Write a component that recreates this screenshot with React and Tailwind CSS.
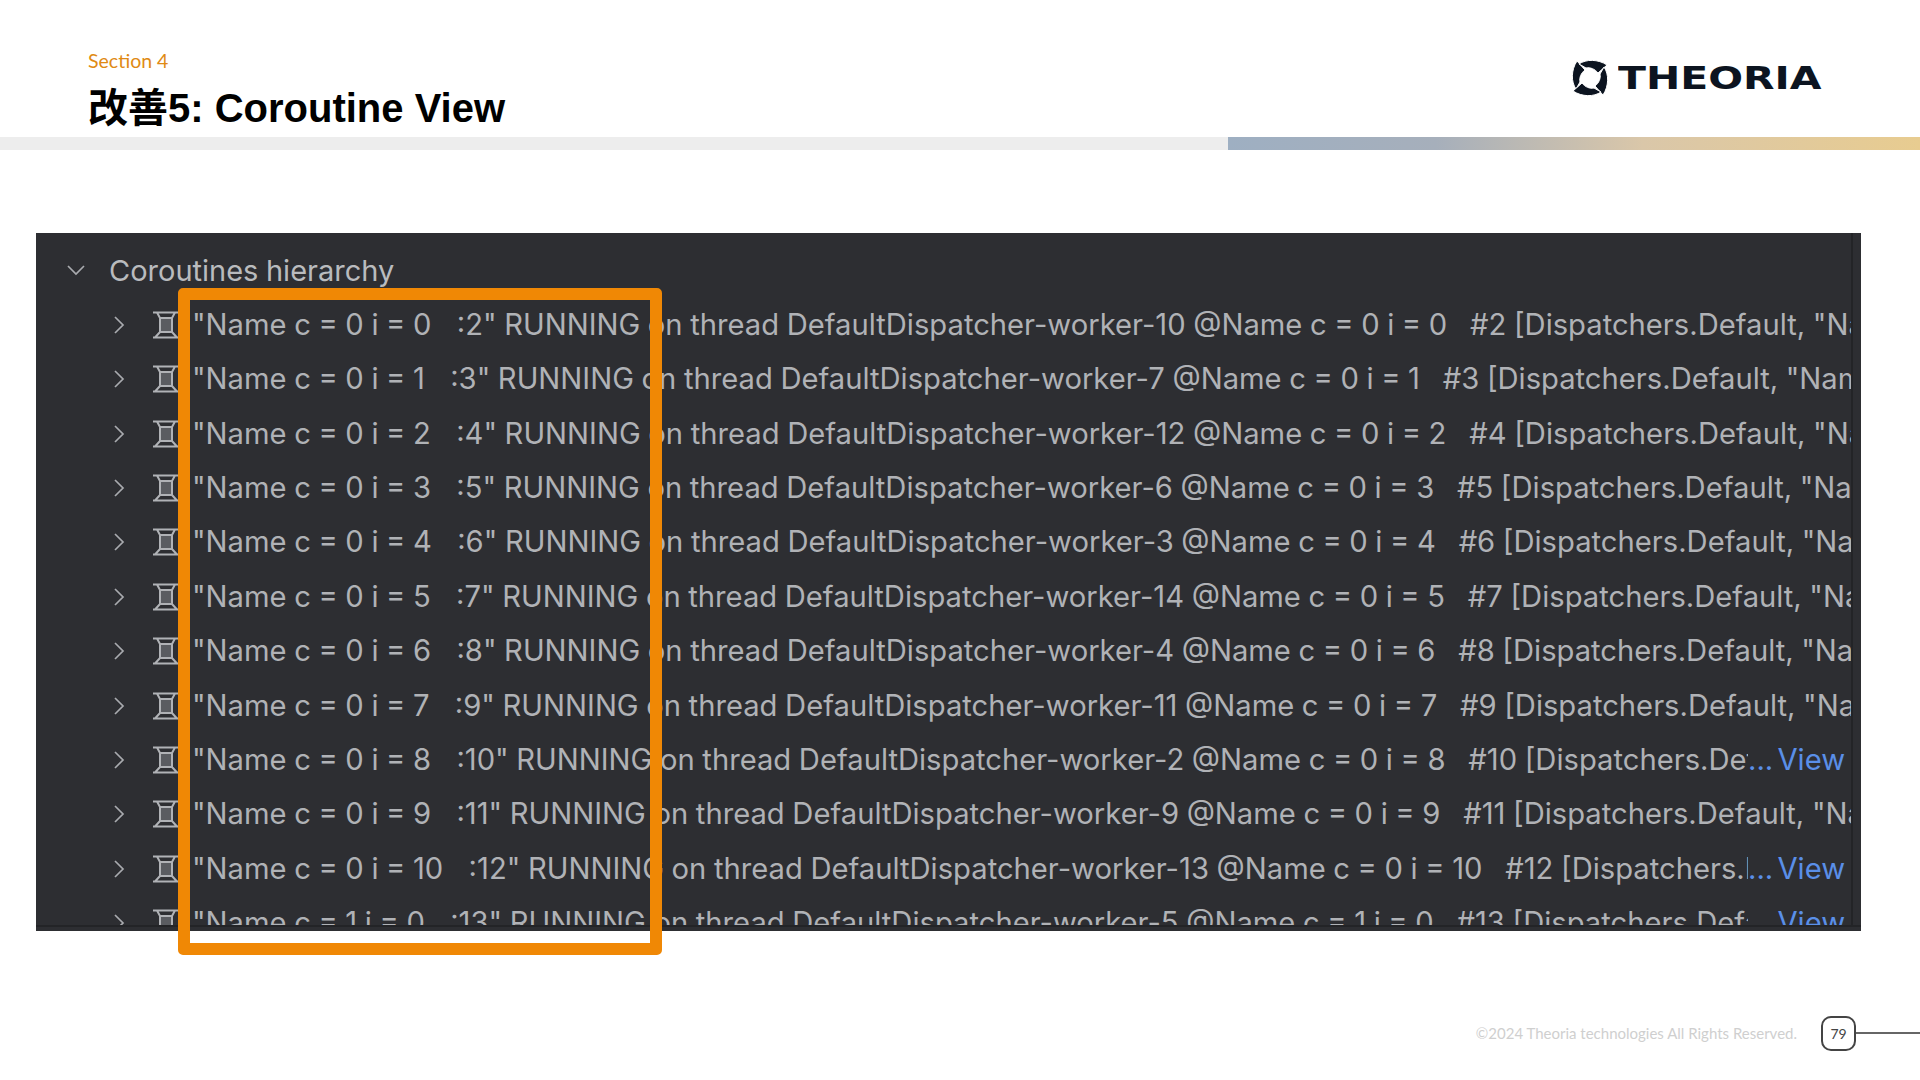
const rows = [
  { n: 'i = 0', a: ':2', w: '10', b: '#2', t: 'Dispatchers.Default, "Name c = 0 i = 0"' },
  { n: 'i = 1', a: ':3', w: '7', b: '#3', t: 'Dispatchers.Default, "Name c = 0 i = 1"' },
  { n: 'i = 2', a: ':4', w: '12', b: '#4', t: 'Dispatchers.Default, "Name c = 0 i = 2"' },
  { n: 'i = 3', a: ':5', w: '6', b: '#5', t: 'Dispatchers.Default, "Name c = 0 i = 3"' },
  { n: 'i = 4', a: ':6', w: '3', b: '#6', t: 'Dispatchers.Default, "Name c = 0 i = 4"' },
  { n: 'i = 5', a: ':7', w: '14', b: '#7', t: 'Dispatchers.Default, "Name c = 0 i = 5"' },
  { n: 'i = 6', a: ':8', w: '4', b: '#8', t: 'Dispatchers.Default, "Name c = 0 i = 6"' },
  { n: 'i = 7', a: ':9', w: '11', b: '#9', t: 'Dispatchers.Default, "Name c = 0 i = 7"' },
  { n: 'i = 8', a: ':10', w: '2', b: '#10', t: 'Dispatchers.Default, "Name c = 0 i = 8"', view: true },
  { n: 'i = 9', a: ':11', w: '9', b: '#11', t: 'Dispatchers.Default, "Name c = 0 i = 9"' },
  { n: 'i = 10', a: ':12', w: '13', b: '#12', t: 'Dispatchers.Default, "Name c = 0 i = 10"', view: true },
  { n: 'i = 0', c: 1, a: ':13', w: '5', b: '#13', t: 'Dispatchers.Default, "Name c = 1 i = 0"', view: true },
];

function Spool() {
  return (
    <svg viewBox="0 0 26 28" className="w-[26px] h-[28px] shrink-0" fill="none" stroke="#b0b2b6" strokeWidth="2">
      <rect x="6" y="7" width="14" height="14" fill="#5a5c61" stroke="none" />
      <path d="M0 1.5H26M0 26.5H26M4 1.5L7 7V21L2 26.5M22 1.5L19 7V21L24 26.5M6 7H20M6 21H20" />
    </svg>
  );
}

function Chevron({ down }) {
  return (
    <svg viewBox="0 0 20 20" className="w-5 h-5 shrink-0" fill="none" stroke="#a9abaf" strokeWidth="1.7">
      {down ? <path d="M2 6L10 14L18 6" /> : <path d="M6 2L14 10L6 18" />}
    </svg>
  );
}

function Mark() {
  const blade = 'M5 1L13 10C9 13 7 18 8 22L4 29C-1 22 -1 10 5 1Z';
  return (
    <svg viewBox="0 0 36 36" className="w-9 h-9 shrink-0" fill="#0c1420" stroke="#ffffff" strokeWidth="1">
      <path d={blade} />
      <path d={blade} transform="rotate(90 18 18)" />
      <path d={blade} transform="rotate(180 18 18)" />
      <path d={blade} transform="rotate(270 18 18)" />
    </svg>
  );
}

export default function App() {
  return (
    <div className="relative w-[1920px] h-[1080px] overflow-hidden bg-white flex flex-col font-['Liberation_Sans',sans-serif]">
      <header className="h-[137px] flex justify-between pl-[88px] pr-[99px]">
        <div className="pt-[49px]">
          <div className="text-[19.5px] leading-[24px] text-[#e08a14] font-['Lato',sans-serif]">Section 4</div>
          <h1 className="mt-[10px] text-[40px] leading-[50px] font-bold text-black font-['Liberation_Sans','Noto_Sans_CJK_SC',sans-serif]">改善5: Coroutine View</h1>
        </div>
        <div className="pt-[60px] flex items-start gap-[10px] w-[249px]">
          <Mark />
          <span className="mt-[-2px] block origin-left scale-x-[1.28] text-[32px] leading-[40px] font-bold text-[#0c1420] font-['DejaVu_Sans',sans-serif]">THEORIA</span>
        </div>
      </header>
      <div className="h-[13px] flex shrink-0">
        <div className="w-[1228px] bg-[#ededed]" />
        <div className="flex-1 bg-[linear-gradient(90deg,#9eafc2_0%,#a6afbb_30%,#dac7a9_60%,#e8cc90_100%)]" />
      </div>
      <main className="h-[781px] pt-[83px] pl-[36px]">
        <section className="w-[1825px] h-[698px] bg-[#2d2e32] flex flex-col overflow-hidden">
          <div className="flex flex-1 min-h-0">
            <div className="w-[1815px] h-[692px] pt-[10px] overflow-hidden text-[#b0b2b6] font-['Inter',sans-serif] text-[29.2px] [word-spacing:-0.6px]">
              <div className="h-[54.6px] flex items-center pl-[30px] gap-[23px] text-[#b9bbbe] text-[29px]">
                <Chevron down />
                <span>Coroutines hierarchy</span>
              </div>
              {rows.map((r) => (
                <div key={r.b} className="h-[54.4px] flex items-center pl-[73px]">
                  <Chevron />
                  <div className="ml-[24px]"><Spool /></div>
                  <div className="ml-[13px] flex-1 min-w-0 flex items-center">
                    <div className="flex-1 min-w-0 overflow-hidden whitespace-pre">
                      {`"Name c = ${r.c || 0} ${r.n}   `}
                      <span className="ml-[2.5px]">{`${r.a}" RUNNING on thread DefaultDispatcher-worker-${r.w} @Name c = ${r.c || 0} ${r.n}   ${r.b} [${r.t}]`}</span>
                    </div>
                    {r.view && <span className="w-[103px] shrink-0 text-[#5a8fe8] whitespace-pre [word-spacing:-4px]">... View</span>}
                  </div>
                </div>
              ))}
            </div>
            <div className="w-[10px] border-l-2 border-[#232427]" />
          </div>
          <div className="h-[6px] border-t-2 border-[#232427]" />
        </section>
      </main>
      <footer className="flex-1 flex items-start justify-end pt-[85px]">
        <span className="mt-[7px] text-[15px] leading-[20px] text-[#cfcfcf] font-['Lato',sans-serif]">©2024 Theoria technologies All Rights Reserved.</span>
        <span className="ml-[24px] w-[35px] h-[35px] border-2 border-[#444] rounded-[10px] flex items-center justify-center text-[14px] text-[#444] font-['Lato',sans-serif]">79</span>
        <span className="mt-[16px] w-[64px] h-[2px] bg-[#666]" />
      </footer>
      <div className="absolute left-[178px] top-[288px] w-[484px] h-[667px] border-[12px] border-[#f08805] rounded-[5px]" />
    </div>
  );
}
